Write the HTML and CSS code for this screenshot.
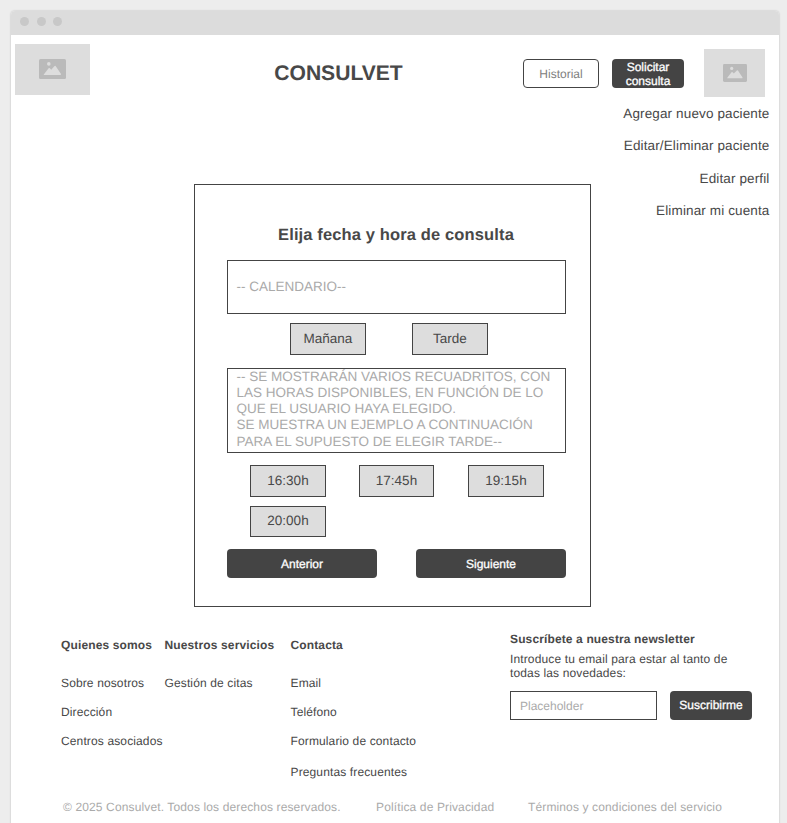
FILE: index.html
```html
<!DOCTYPE html>
<html lang="es">
<head>
<meta charset="utf-8">
<title>Consulvet</title>
<link rel="stylesheet" href="styles.css">
</head>
<body>
<div class="window">
  <div class="titlebar"><span class="dot"></span><span class="dot"></span><span class="dot"></span></div>
  <header class="header">
    <div class="picture logo">
      <svg width="27" height="20" viewBox="0 0 27 20"><rect width="27" height="20" rx="1.5" fill="#bababa"/><circle cx="9.8" cy="4.9" r="1.8" fill="#ddd"/><path d="M4.8 15.4 9.6 9.2Q10.2 8.6 10.9 9.2L12.2 10.7 15.6 7.1Q16.2 6.6 16.8 7.2L22 15Q22 16 21.2 16H5.2Q4.5 16 4.8 15.4Z" fill="#ddd"/></svg>
    </div>
    <h1 class="brand">CONSULVET</h1>
    <button class="button outline">Historial</button>
    <button class="button request">Solicitar consulta</button>
    <div class="picture avatar">
      <svg width="24" height="18" viewBox="0 0 27 20"><rect width="27" height="20" rx="1.5" fill="#bababa"/><circle cx="9.8" cy="4.9" r="1.8" fill="#ddd"/><path d="M4.8 15.4 9.6 9.2Q10.2 8.6 10.9 9.2L12.2 10.7 15.6 7.1Q16.2 6.6 16.8 7.2L22 15Q22 16 21.2 16H5.2Q4.5 16 4.8 15.4Z" fill="#ddd"/></svg>
    </div>
  </header>
  <div class="content">
    <main class="card">
      <h2 class="card-title">Elija fecha y hora de consulta</h2>
      <div class="calendar">-- CALENDARIO--</div>
      <div class="shifts"><button class="slot">Mañana</button><button class="slot">Tarde</button></div>
      <div class="note">-- SE MOSTRARÁN VARIOS RECUADRITOS, CON<br>LAS HORAS DISPONIBLES, EN FUNCIÓN DE LO<br>QUE EL USUARIO HAYA ELEGIDO.<br>SE MUESTRA UN EJEMPLO A CONTINUACIÓN<br>PARA EL SUPUESTO DE ELEGIR TARDE--</div>
      <div class="hours">
        <button class="slot">16:30h</button><button class="slot">17:45h</button><button class="slot">19:15h</button>
        <button class="slot">20:00h</button>
      </div>
      <div class="steps"><button class="button">Anterior</button><button class="button">Siguiente</button></div>
    </main>
    <nav class="menu">
      <a>Agregar nuevo paciente</a>
      <a>Editar/Eliminar paciente</a>
      <a>Editar perfil</a>
      <a>Eliminar mi cuenta</a>
    </nav>
  </div>
  <footer class="footer">
    <div class="columns">
      <section class="column about"><h3>Quienes somos</h3><a>Sobre nosotros</a><a>Dirección</a><a>Centros asociados</a></section>
      <section class="column services"><h3>Nuestros servicios</h3><a>Gestión de citas</a></section>
      <section class="column contact"><h3>Contacta</h3><a>Email</a><a>Teléfono</a><a>Formulario de contacto</a><a class="faq">Preguntas frecuentes</a></section>
      <section class="newsletter">
        <h3>Suscríbete a nuestra newsletter</h3>
        <p>Introduce tu email para estar al tanto de<br>todas las novedades:</p>
        <div class="subscribe"><div class="field">Placeholder</div><button class="button">Suscribirme</button></div>
      </section>
    </div>
    <div class="legal"><span>© 2025 Consulvet. Todos los derechos reservados.</span><a>Política de Privacidad</a><a>Términos y condiciones del servicio</a></div>
  </footer>
</div>
</body>
</html>
```
FILE: styles.css
```css
* { box-sizing: border-box; }
html { height: 100%; overflow: hidden; }
body {
  margin: 0;
  height: 100%;
  padding: 11px 8px 0 11px;
  overflow: hidden;
  background: #ededed;
  color: #484848;
  font: 12px/16px "Liberation Sans", Arial, sans-serif;
  letter-spacing: 0.13px;
}
body, button { text-rendering: geometricPrecision; }
h1, h2, h3, p { margin: 0; }
svg { display: block; }
.window {
  height: 830px;
  background: #fff;
  border-radius: 4px 4px 0 0;
  box-shadow: 0 0 2px rgba(0, 0, 0, 0.25);
}
.titlebar {
  display: flex;
  gap: 7.5px;
  height: 24px;
  padding: 6px 0 0 9px;
  background: #dcdcdc;
  border-radius: 4px 4px 0 0;
}
.dot { width: 9px; height: 9px; border-radius: 50%; background: #c8c8c8; }
.header {
  display: flex;
  align-items: flex-start;
  height: 68px;
  padding: 9px 14px 0 4px;
}
.picture { display: flex; align-items: center; justify-content: center; background: #ddd; }
.logo { width: 75px; height: 51px; padding-bottom: 1px; }
.avatar { width: 61px; height: 48px; margin: 5px 0 0 20px; }
.picture, .header .button { flex-shrink: 0; }
.brand {
  width: 250px;
  margin: 18px 59.5px 0 123.5px;
  flex-shrink: 0;
  text-align: center;
  font-size: 21.1px;
  line-height: 24px;
  letter-spacing: 0;
}
.button {
  height: 29px;
  margin: 0;
  padding: 0 4px;
  border: 0;
  border-radius: 4px;
  background: #444;
  color: #fff;
  font: 12px/14px "Liberation Sans", Arial, sans-serif;
  letter-spacing: 0;
  -webkit-text-stroke: 0.3px #fff;
}
.header .button { width: 76px; margin-top: 15px; }
.header .request { width: 72px; margin-left: 13px; }
.button.outline {
  border: 1px solid #444;
  background: #fff;
  color: #808080;
  -webkit-text-stroke: 0;
}
.content { display: flex; align-items: flex-start; justify-content: space-between; padding: 0 9.5px 0 183px; }
.menu {
  display: flex;
  flex-direction: column;
  margin-top: -5px;
  text-align: right;
  font-size: 13.5px;
  line-height: 32.4px;
}
.card {
  width: 397px;
  height: 423px;
  margin-top: 81px;
  padding: 39px 24px 0 32px;
  border: 1px solid #444;
}
.card-title { height: 36px; padding-right: 1px; font-size: 16.5px; line-height: 22px; text-align: center; }
.calendar, .note {
  border: 1px solid #444;
  padding: 0 8.5px;
  color: #aaa;
  font-size: 13.5px;
  letter-spacing: 0;
  white-space: nowrap;
}
.calendar { height: 54px; line-height: 52px; }
.note { height: 85px; line-height: 16.15px; }
.shifts { display: flex; gap: 46px; margin: 9px 0 13px; padding-left: 63px; }
.slot {
  width: 76px;
  height: 32px;
  padding: 0;
  border: 1px solid #444;
  background: #ddd;
  color: #484848;
  font: 13.5px/16px "Liberation Sans", Arial, sans-serif;
}
.hours {
  display: grid;
  grid-template-columns: repeat(3, 76px);
  gap: 9px 33px;
  margin: 12px 0;
  padding-left: 23px;
}
.hours .slot:nth-child(2) { width: 75px; }
.hours .slot:nth-child(4) { height: 31px; padding-bottom: 2px; }
.steps { display: flex; justify-content: space-between; }
.steps .button { width: 150px; }
.footer { padding-left: 50px; }
h3 { font-size: 12px; line-height: 16px; }
.columns { display: flex; height: 168px; padding-top: 24px; }
.column { display: flex; flex-direction: column; gap: 13px; padding-top: 6px; white-space: nowrap; }
.column h3 { margin-bottom: 9px; }
.about { width: 103.5px; }
.services { width: 126px; }
.contact { width: 219.5px; }
.faq { margin-top: 2px; }
.newsletter p { margin-top: 5px; line-height: 14px; white-space: nowrap; }
.subscribe { display: flex; gap: 13px; margin-top: 11px; }
.field {
  width: 147px;
  height: 29px;
  padding: 1px 9px 0;
  border: 1px solid #444;
  color: #aaa;
  line-height: 27px;
  letter-spacing: 0;
}
.subscribe .button { width: 82px; padding-bottom: 2px; }
.legal { display: flex; padding: 24px 0 0 2px; color: #aaa; white-space: nowrap; }
.legal span { width: 313px; }
.legal a:nth-child(2) { width: 152px; }
```
